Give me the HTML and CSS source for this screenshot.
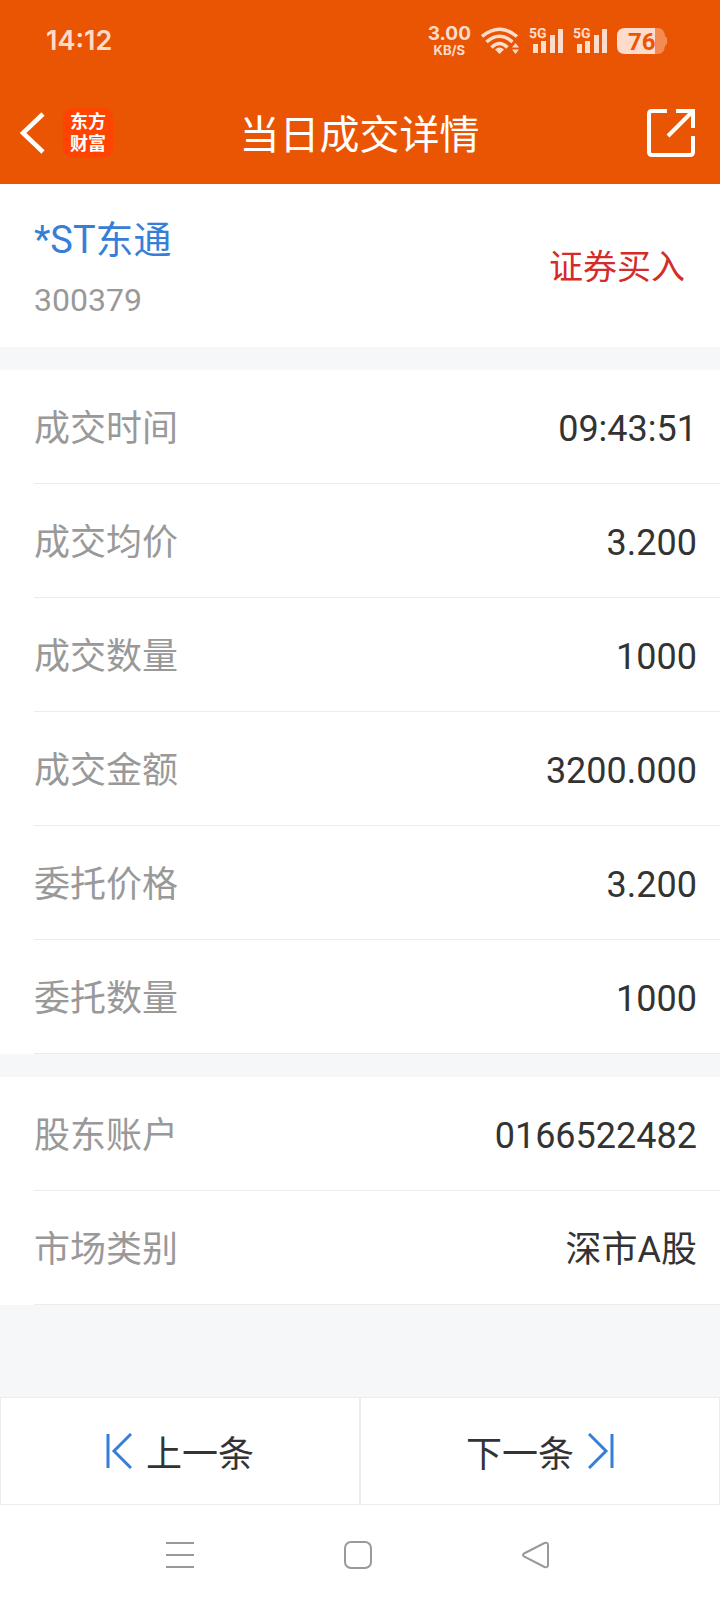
FILE: index.html
```html
<!DOCTYPE html>
<html lang="zh-CN">
<head>
<meta charset="utf-8">
<meta name="viewport" content="width=device-width, initial-scale=1">
<title>当日成交详情</title>
<link rel="stylesheet" href="styles.css">
</head>
<body>
<div class="screen">
  <header class="top">
    <div class="status">
      <span class="clock">14:12</span>
      <div class="indicators">
        <span class="speed"><span class="rate">3.00</span><span class="unit">KB/S</span></span>
        <svg class="wifi" width="38" height="28" viewBox="0 0 38 28" aria-hidden="true">
          <g fill="none" stroke="currentColor" stroke-width="3.500">
            <path d="M1 9.500Q18.500-5 36 9.500"/>
            <path d="M5.500 15Q18.500 3.500 31.500 15"/>
            <path d="M10.500 20.500Q18.500 12.500 26.500 20.500"/>
          </g>
          <path fill="currentColor" d="M14 22.500Q18.500 18.500 23 22.500L18.500 27ZM34.500 16L38 20.500H31ZM34.500 27L38 22.500H31Z"/>
        </svg>
        <svg class="signal" width="34" height="28" viewBox="0 0 34 28" role="img">
          <text class="net" x="0" y="11">5G</text>
          <path fill="currentColor" d="M4 17h5v9H4zM12 14h5v12h-5zM21 8h5v18h-5zM29 2h5v24h-5z"/>
        </svg>
        <svg class="signal" width="34" height="28" viewBox="0 0 34 28" role="img">
          <text class="net" x="0" y="11">5G</text>
          <path fill="currentColor" d="M4 17h5v9H4zM12 14h5v12h-5zM21 8h5v18h-5zM29 2h5v24h-5z"/>
        </svg>
        <svg class="battery" width="50" height="28" viewBox="0 0 50 28" role="img">
          <path fill="#f38b52" d="M38 1h3q6 0 7 8l2 2v6l-2 2q-1 8-7 8h-3z"/>
          <path fill="currentColor" d="M38 1H8Q0 1 0 9v10q0 8 8 8h30z"/>
          <text class="level" x="11" y="23">76</text>
        </svg>
      </div>
    </div>
    <div class="bar">
      <div class="bar-left">
        <button class="icon-button" type="button" aria-label="返回">
          <svg width="26" height="42" viewBox="0 0 26 42"><path d="M23 2L3 21L23 40" fill="none" stroke="currentColor" stroke-width="4.500"/></svg>
        </button>
        <span class="brand"><span>东方</span><span>财富</span></span>
      </div>
      <h1 class="title">当日成交详情</h1>
      <button class="icon-button share" type="button" aria-label="分享">
        <svg width="48" height="48" viewBox="0 0 48 48"><path d="M20 2H5Q2 2 2 5V43Q2 46 5 46H43Q46 46 46 43V27M29 2H46V19M46 2L21 27" fill="none" stroke="currentColor" stroke-width="4"/></svg>
      </button>
    </div>
  </header>

  <main class="content">
    <section class="stock">
      <div>
        <h2 class="stock-name"><a href="#stock">*ST东通</a></h2>
        <p class="stock-code">300379</p>
      </div>
      <p class="side">证券买入</p>
    </section>
    <dl class="list">
      <div class="row"><dt>成交时间</dt><dd>09:43:51</dd></div>
      <div class="row"><dt>成交均价</dt><dd>3.200</dd></div>
      <div class="row"><dt>成交数量</dt><dd>1000</dd></div>
      <div class="row"><dt>成交金额</dt><dd>3200.000</dd></div>
      <div class="row"><dt>委托价格</dt><dd>3.200</dd></div>
      <div class="row"><dt>委托数量</dt><dd>1000</dd></div>
    </dl>
    <dl class="list">
      <div class="row"><dt>股东账户</dt><dd>0166522482</dd></div>
      <div class="row"><dt>市场类别</dt><dd>深市A股</dd></div>
    </dl>
  </main>

  <div class="pager">
    <button class="page-button" type="button">
      <svg width="26" height="36" viewBox="0 0 26 36" aria-hidden="true"><path d="M2 1V35M25 1L8 18L25 35"/></svg>
      <span>上一条</span>
    </button>
    <button class="page-button" type="button">
      <span>下一条</span>
      <svg width="26" height="36" viewBox="0 0 26 36" aria-hidden="true"><path d="M24 1V35M1 1L18 18L1 35"/></svg>
    </button>
  </div>

  <nav class="system">
    <button class="icon-button" type="button" aria-label="菜单">
      <svg width="28" height="28" viewBox="0 0 28 28"><path d="M0 2H28M0 14H28M0 26H28"/></svg>
    </button>
    <button class="icon-button" type="button" aria-label="主页">
      <svg width="28" height="28" viewBox="0 0 28 28"><rect x="1" y="1" width="26" height="26" rx="6"/></svg>
    </button>
    <button class="icon-button" type="button" aria-label="后退">
      <svg width="28" height="28" viewBox="0 0 28 28"><path d="M2 12.500L22.500 2Q26 1 26 4V24Q26 27 22.500 26L2 15.500Q0 14 2 12.500Z"/></svg>
    </button>
  </nav>
</div>
</body>
</html>
```
FILE: styles.css
```css
* {
  box-sizing: border-box;
}

body,
h1,
h2,
p,
dl,
dd {
  margin: 0;
  font-weight: 400;
}

body {
  font-family: Roboto, "Noto Sans CJK SC", sans-serif;
  color: #333;
  background: #fff;
}

button {
  padding: 0;
  border: 0;
  font: inherit;
  color: inherit;
  background: none;
}

svg {
  display: block;
}

.screen {
  display: flex;
  flex-direction: column;
  min-height: 100vh;
}

.top {
  color: #fff;
  background: #ea5504;
}

.status {
  display: flex;
  align-items: center;
  justify-content: space-between;
  height: 80px;
  padding: 2px 53px 0 46px;
  color: #fddccb;
  font-family: Inter, sans-serif;
}

.clock {
  font-size: 27px;
  font-weight: 600;
  line-height: 32px;
}

.indicators {
  display: flex;
  align-items: center;
  gap: 10px;
}

.speed {
  display: flex;
  flex-direction: column;
  align-items: center;
  font-weight: 700;
}

.rate {
  font-size: 19px;
  line-height: 18px;
}

.unit {
  font-size: 13px;
  line-height: 14px;
}

.net {
  font: 700 14px Roboto, sans-serif;
  fill: currentColor;
  text-rendering: geometricPrecision;
}

.level {
  font: 700 24px Roboto, sans-serif;
  fill: #ea5504;
}

.bar {
  display: grid;
  grid-template-columns: 1fr auto 1fr;
  align-items: center;
  height: 104px;
  padding: 2px 25px 0 20px;
}

.bar-left {
  display: flex;
  align-items: center;
  gap: 17px;
}

.brand {
  display: flex;
  flex-direction: column;
  align-items: center;
  justify-content: center;
  width: 50px;
  height: 50px;
  border-radius: 10px;
  background: #ff4400;
  font-size: 18px;
  font-weight: 700;
  line-height: 22px;
}

.title {
  padding: 6px 0 0 4px;
  font-size: 40px;
  line-height: 56px;
}

.share {
  justify-self: end;
}

.content {
  flex: 1;
  background: #f6f7f9;
}

.stock {
  display: flex;
  align-items: center;
  justify-content: space-between;
  height: 163px;
  padding: 0 35px 0 34px;
  background: #fff;
}

.stock-name {
  padding-top: 4px;
  font-size: 38px;
  line-height: 56px;
}

.stock-name a {
  color: #377fd6;
  text-decoration: none;
}

.stock-code {
  padding-top: 8px;
  color: #999;
  font-size: 32px;
  line-height: 48px;
}

.side {
  padding-top: 2px;
  color: #d42b2b;
  font-size: 34px;
  line-height: 48px;
}

.list {
  margin-top: 23px;
  background: #fff;
}

.row {
  display: flex;
  justify-content: space-between;
  padding: 4px 23px 0 34px;
  background: linear-gradient(#ececec, #ececec) 34px 100% / 100% 1px no-repeat;
  font-size: 36px;
  line-height: 110px;
}

.row dt {
  color: #999;
}

.pager {
  display: grid;
  grid-template-columns: 1fr 1fr;
  height: 108px;
}

.page-button {
  display: flex;
  align-items: center;
  justify-content: center;
  gap: 14px;
  border: 1px solid #ececec;
  font-size: 36px;
}

.page-button svg {
  fill: none;
  stroke: #377fd6;
  stroke-width: 3;
}

.system {
  display: flex;
  align-items: center;
  justify-content: center;
  gap: 150px;
  height: 99px;
  padding-right: 4px;
}

.system svg {
  fill: none;
  stroke: #999;
  stroke-width: 2;
}
```
